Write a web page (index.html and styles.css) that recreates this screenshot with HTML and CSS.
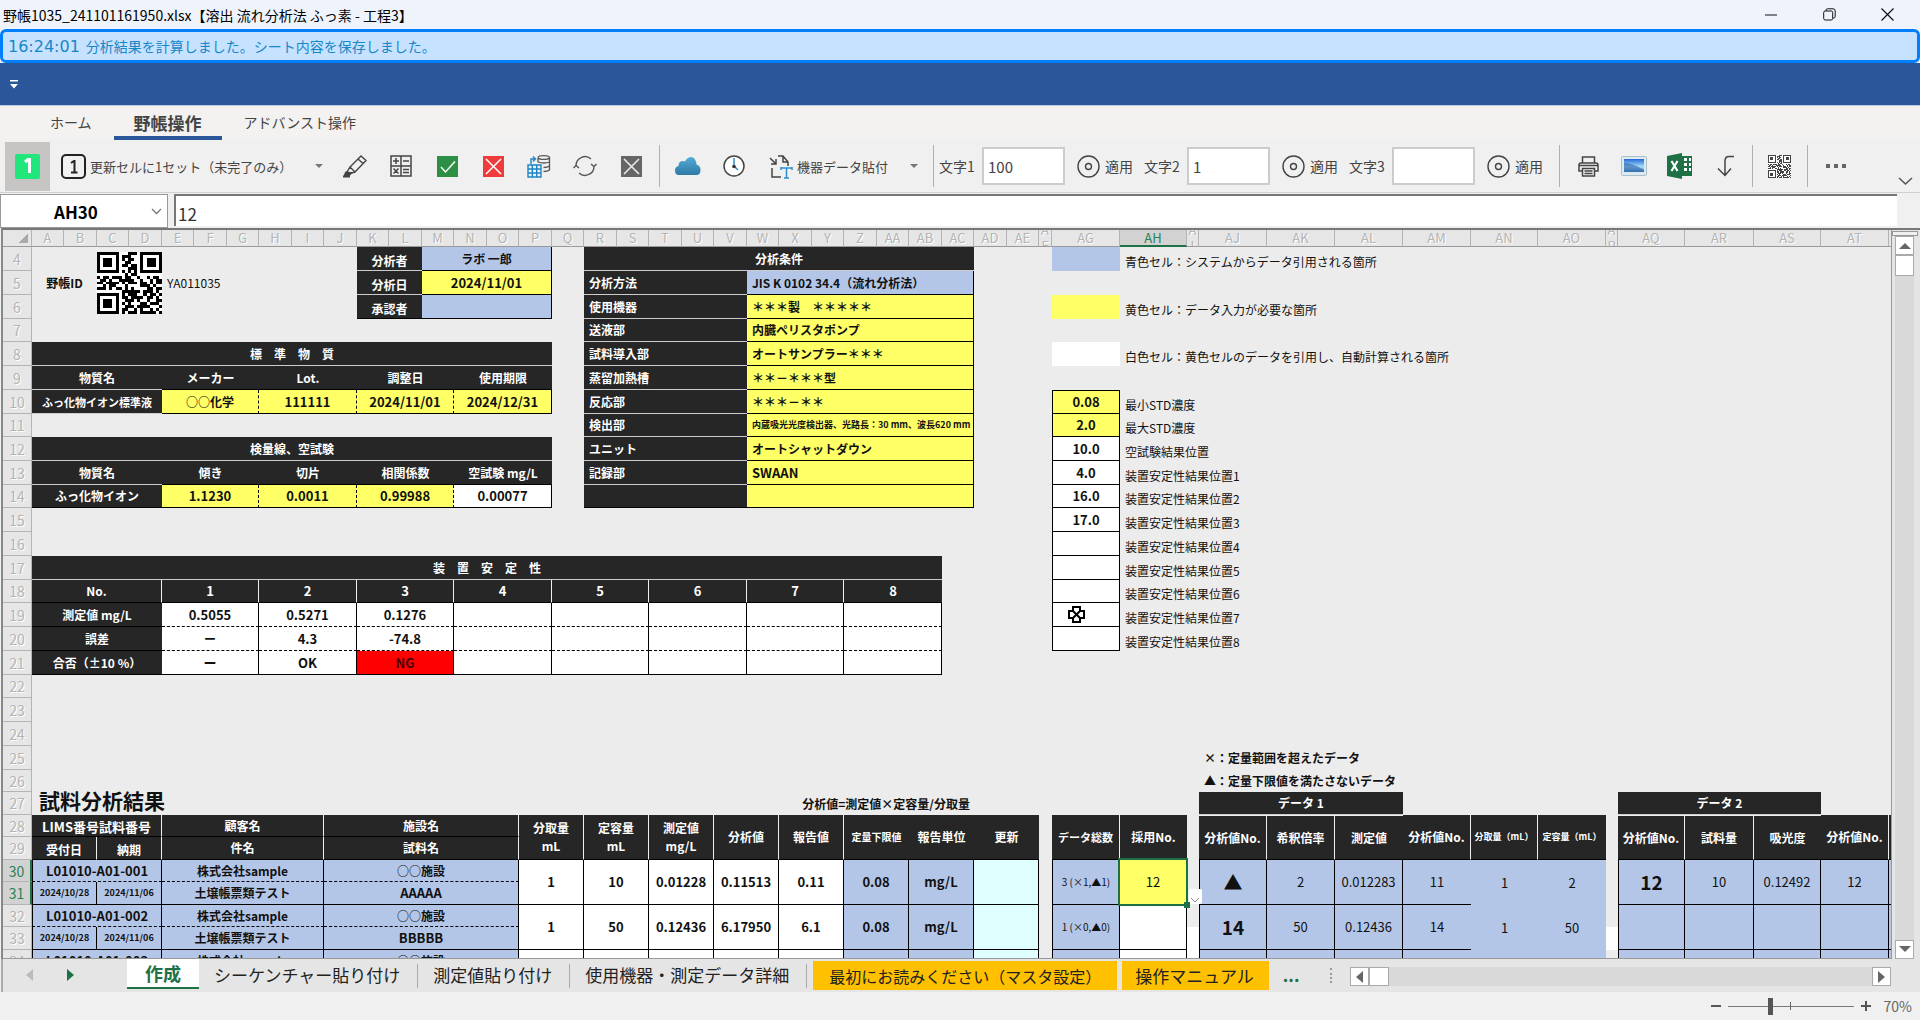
FILE: index.html
```html
<!DOCTYPE html>
<html lang="ja">
<head>
    <meta charset="UTF-8">
    <meta name="viewport" content="width=device-width, initial-scale=1.0">
    <title>野帳1035_241101161950.xlsx</title>
    <link rel="stylesheet" href="styles.css">
</head>
<body>

<header class="titlebar">
    <h1>野帳1035_241101161950.xlsx【溶出 流れ分析法 ふっ素 - 工程3】</h1>
    <div class="window-buttons">
        <button type="button" aria-label="最小化"><svg width="12" height="12" viewBox="0 0 12 12"><path d="M0 6h12" stroke="#111"/></svg></button>
        <button type="button" aria-label="元に戻す"><svg width="13" height="13" viewBox="0 0 13 13" fill="none" stroke="#111"><rect x=".7" y="3" width="9" height="9" rx="1.5"/><path d="M3 3V2.300Q3 .8 4.500 .8H10Q12.200 .8 12.200 3V8.500Q12.200 10 10.500 10H10"/></svg></button>
        <button type="button" aria-label="閉じる"><svg width="13" height="13" viewBox="0 0 13 13"><path d="M.5.5l12 12M12.500.5l-12 12" stroke="#111" stroke-width="1.200"/></svg></button>
    </div>
</header>

<div class="notice"><span class="time">16:24:01</span> 分析結果を計算しました。シート内容を保存しました。</div>

<div class="quickbar">
    <button type="button" aria-label="クイックアクセス"><svg width="8" height="9" viewBox="0 0 8 9" fill="#fff"><path d="M0 0h8v1.500H0zM0 4h8L4 8.500z"/></svg></button>
</div>

<nav class="ribbon-tabs">
    <button type="button">ホーム</button>
    <button type="button" class="active">野帳操作</button>
    <button type="button">アドバンスト操作</button>
</nav>

<div class="toolbar">
    <button type="button" class="tool pressed" aria-label="1セット">
        <svg width="25" height="25" viewBox="0 0 25 25"><rect width="25" height="25" rx="2" fill="#21e67c"/><path d="M10 8l3-2.500h1.500V19" fill="none" stroke="#fff" stroke-width="3"/></svg>
    </button>
    <button type="button" class="tool wide set-menu">
        <svg width="25" height="25" viewBox="0 0 25 25"><rect x="1" y="1" width="23" height="23" rx="4" fill="none" stroke="#222" stroke-width="2"/><path d="M10 9l3-2h.5v12M10 18.500h6.500" fill="none" stroke="#222" stroke-width="2"/></svg>
        <span>更新セルに1セット（未完了のみ）</span>
        <i class="caret"></i>
    </button>
    <button type="button" class="tool" aria-label="マーカー">
        <svg width="26" height="24" viewBox="0 0 26 24" fill="none" stroke="#444" stroke-width="1.400"><path d="M8 13L19 2l5 4.500L13 18zM8 13l5 5M19 2l-3 3 5 4.500M8 13l-3 5 3 1.500 5-1.500"/><path d="M4 18.500l5 .5-2 2H3zM1 22.500h7" fill="#444" stroke-width="2"/></svg>
    </button>
    <button type="button" class="tool" aria-label="計算">
        <svg width="22" height="22" viewBox="0 0 22 22" fill="none" stroke="#444" stroke-width="1.500"><path d="M1 1h20v20H1zM11 1v20M1 11h20M3 6h6M6 3v6M13 6h6M13 14.500h6M13 17.500h6M3.500 13.500l5 5M8.500 13.500l-5 5"/></svg>
    </button>
    <button type="button" class="tool" aria-label="完了">
        <svg width="21" height="21" viewBox="0 0 21 21"><rect width="21" height="21" fill="#2d8f43"/><path d="M4 11l4.500 5L18 5.500" fill="none" stroke="#fff" stroke-width="1.500"/></svg>
    </button>
    <button type="button" class="tool" aria-label="未完了">
        <svg width="21" height="21" viewBox="0 0 21 21"><rect width="21" height="21" fill="#ef3b3b"/><path d="M3 3l15 15M18 3L3 18" stroke="#fff" stroke-width="1.500"/></svg>
    </button>
    <button type="button" class="tool" aria-label="データ更新">
        <svg width="24" height="24" viewBox="0 0 24 24" fill="none"><path d="M11 4v4q6 2 11.500 0V3M11 3.500a5.800 2.200 0 0 1 11.500 0a5.800 2.200 0 0 1-11.500 0M22.500 7v5q-2 1.500-6 1.500M22.500 11v5q-2 1.500-6 1.500" stroke="#555" stroke-width="1.300"/><path d="M1 11h13v12H1zM1 15h13M1 19h13M5.300 11v12M9.700 11v12M4 10V5h4M6 2.500L8.500 5 6 7.500" stroke="#1c84c6" stroke-width="1.400"/></svg>
    </button>
    <button type="button" class="tool" aria-label="再読込">
        <svg width="24" height="22" viewBox="0 0 24 22" fill="none" stroke="#555" stroke-width="1.400"><path d="M3 11a9 9 0 0 1 15-7M21 11a9 9 0 0 1-15 7M.5 13L3 10.500 6 13M18 9l3 2.500L23.500 9"/></svg>
    </button>
    <button type="button" class="tool" aria-label="クリア">
        <svg width="21" height="21" viewBox="0 0 21 21"><rect width="21" height="21" fill="#666"/><path d="M3 3l15 15M18 3L3 18" stroke="#eee" stroke-width="1.500"/></svg>
    </button>
    <i class="sep"></i>
    <button type="button" class="tool" aria-label="クラウド">
        <svg width="26" height="18" viewBox="0 0 26 18"><defs><linearGradient id="cloud" x2="0" y2="1"><stop stop-color="#56abd8"/><stop offset="1" stop-color="#2d7aa5"/></linearGradient></defs><path d="M4 18Q0 18 0 13.500 0 9.500 3.500 9 3.500 4 8 4 9 4 10 4.500 12 0 16.500 0 21 1 21.500 7.500 25.500 8.500 25.500 13 25.500 18 21.500 18z" fill="url(#cloud)"/></svg>
    </button>
    <button type="button" class="tool" aria-label="履歴">
        <svg width="22" height="22" viewBox="0 0 22 22" fill="none"><circle cx="11" cy="11" r="10" fill="#fff" stroke="#444" stroke-width="1.500"/><path d="M11 3v8l4 4" stroke="#2a8dd4" stroke-width="1.500"/><circle cx="11" cy="11.500" r="1.800" fill="#333"/></svg>
    </button>
    <button type="button" class="tool wide paste-menu">
        <svg width="24" height="25" viewBox="0 0 24 25" fill="none" stroke="#444" stroke-width="1.500"><path d="M3 14v9h9M9 2h5l5 6v4M14 2v6h5M1 4l6 6M7 5v5H2"/><path d="M12 14h11M17.500 14v10M15 24h5M12 13v3M23 13v3" stroke="#2a8dd4"/></svg>
        <span>機器データ貼付</span>
        <i class="caret"></i>
    </button>
    <i class="sep"></i>
    <div class="field">
        <label for="text1">文字1</label>
        <input type="text" id="text1" value="100">
        <button type="button"><svg width="23" height="23" viewBox="0 0 23 23" fill="none" stroke="#444" stroke-width="1.400"><circle cx="11.500" cy="11.500" r="10.500"/><circle cx="11.500" cy="11.500" r="3"/></svg>適用</button>
    </div>
    <div class="field">
        <label for="text2">文字2</label>
        <input type="text" id="text2" value="1">
        <button type="button"><svg width="23" height="23" viewBox="0 0 23 23" fill="none" stroke="#444" stroke-width="1.400"><circle cx="11.500" cy="11.500" r="10.500"/><circle cx="11.500" cy="11.500" r="3"/></svg>適用</button>
    </div>
    <div class="field">
        <label for="text3">文字3</label>
        <input type="text" id="text3" value="">
        <button type="button"><svg width="23" height="23" viewBox="0 0 23 23" fill="none" stroke="#444" stroke-width="1.400"><circle cx="11.500" cy="11.500" r="10.500"/><circle cx="11.500" cy="11.500" r="3"/></svg>適用</button>
    </div>
    <i class="sep"></i>
    <button type="button" class="tool" aria-label="印刷">
        <svg width="21" height="21" viewBox="0 0 21 21" fill="none" stroke="#444" stroke-width="1.500"><path d="M4.500 7V1h12v6M4.500 15H1V9q0-2 2-2h15q2 0 2 2v6h-3.500M1 9.500h19"/><path d="M4.500 12.500h12V20h-12zM6.500 15h8M6.500 17.500h8"/></svg>
    </button>
    <button type="button" class="tool" aria-label="画像">
        <svg width="26" height="20" viewBox="0 0 26 20"><defs><linearGradient id="sky" x2="0" y2="1"><stop stop-color="#2467d8"/><stop offset=".6" stop-color="#a9e0fa"/><stop offset="1" stop-color="#3f86b8"/></linearGradient></defs><rect x=".5" y=".5" width="25" height="19" rx="1" fill="#dfeaf0" stroke="#a9c0cc"/><rect x="3" y="3" width="20" height="13" fill="url(#sky)"/><path d="M3 7q9 0 20 7v2H3z" fill="#2c63a8" opacity=".6"/></svg>
    </button>
    <button type="button" class="tool" aria-label="Excel出力">
        <svg width="26" height="26" viewBox="0 0 26 26"><path d="M14 3h11v20H14z" fill="#1e7145"/><path d="M17 5h3v3h-3zM22 5h2v3h-2zM17 10h3v3h-3zM22 10h2v3h-2zM17 15h3v3h-3zM22 15h2v3h-2z" fill="#fff"/><path d="M0 3L15 0v26L0 23z" fill="#1e7145"/><path d="M4.500 8l6 10M10.500 8l-6 10" stroke="#fff" stroke-width="2.200"/></svg>
    </button>
    <button type="button" class="tool" aria-label="下へ移動">
        <svg width="18" height="22" viewBox="0 0 18 22" fill="none" stroke="#444" stroke-width="1.500"><path d="M17 1.500h-5Q8 1.500 8 6v14M1 13.500l7 7 6-7"/></svg>
    </button>
    <i class="sep narrow"></i>
    <button type="button" class="tool" aria-label="QRコード"><svg class="qr" width="23" height="23" fill="#444"></svg></button>
    <i class="sep"></i>
    <button type="button" class="tool" aria-label="その他">
        <svg width="20" height="4" viewBox="0 0 20 4" fill="#666"><path d="M0 0h4v4H0zM8 0h4v4H8zM16 0h4v4h-4z"/></svg>
    </button>
    <button type="button" class="collapse" aria-label="リボンを折りたたむ"><svg width="15" height="8" viewBox="0 0 15 8"><path d="M1 1l6.500 6L14 1" fill="none" stroke="#555" stroke-width="1.500"/></svg></button>
</div>

<div class="formula-bar">
    <div class="name-box">
        <input type="text" value="AH30" aria-label="名前ボックス">
        <button type="button" aria-label="名前一覧"><svg width="11" height="7" viewBox="0 0 11 7"><path d="M1 1l4.500 4.500L10 1" fill="none" stroke="#777" stroke-width="1.300"/></svg></button>
    </div>
    <input type="text" class="formula" value="12" aria-label="数式">
</div>

<main class="sheet-area">
    <div class="viewport">
        <table class="sheet" id="sheet"></table>
    </div>
    <div class="vscroll">
        <div class="splitter"></div>
        <button type="button" aria-label="上へ"><svg width="12" height="7" viewBox="0 0 12 7"><path d="M0 7l6-6 6 6z" fill="#666"/></svg></button>
        <div class="thumb"></div>
        <div class="track"></div>
        <button type="button" aria-label="下へ"><svg width="12" height="7" viewBox="0 0 12 7"><path d="M0 0l6 6 6-6z" fill="#666"/></svg></button>
    </div>
</main>

<div class="sheet-tabs">
    <button type="button" class="prev" aria-label="前のシート"><svg width="7" height="12" viewBox="0 0 7 12"><path d="M7 0v12L0 6z" fill="#bbb"/></svg></button>
    <button type="button" class="next" aria-label="次のシート"><svg width="7" height="12" viewBox="0 0 7 12"><path d="M0 0v12l7-6z" fill="#1e7145"/></svg></button>
    <button type="button" class="tab current">作成</button>
    <button type="button" class="tab">シーケンチャー貼り付け</button>
    <button type="button" class="tab">測定値貼り付け</button>
    <button type="button" class="tab">使用機器・測定データ詳細</button>
    <button type="button" class="tab orange manual">最初にお読みください（マスタ設定）</button>
    <button type="button" class="tab orange">操作マニュアル</button>
    <button type="button" class="more">...</button>
    <i class="grip"></i>
    <div class="hscroll">
        <button type="button" aria-label="左へ"><svg width="7" height="12" viewBox="0 0 7 12"><path d="M7 0v12L0 6z" fill="#666"/></svg></button>
        <div class="thumb"></div>
        <div class="track"></div>
        <button type="button" aria-label="右へ"><svg width="7" height="12" viewBox="0 0 7 12"><path d="M0 0v12l7-6z" fill="#666"/></svg></button>
    </div>
</div>

<footer class="status">
    <button type="button" aria-label="縮小"><svg width="10" height="10" viewBox="0 0 10 10"><path d="M0 5h10" stroke="#555" stroke-width="2"/></svg></button>
    <input type="range" id="zoom" min="10" max="190" value="70" aria-label="ズーム">
    <button type="button" aria-label="拡大"><svg width="10" height="10" viewBox="0 0 10 10"><path d="M0 5h10M5 0v10" stroke="#555" stroke-width="2"/></svg></button>
    <label for="zoom">70%</label>
</footer>

<script src="sheet.js"></script>
</body>
</html>
```

FILE: sheet.js
```js
const FIRST_ROW = 4;
const rowHeights = [24, 24, 24, 23, 24, 24, 24, 23, 24, 24, 23, 24, 24, 24, 23, 24, 24,
    24, 23, 24, 24, 24, 22, 23, 22, 23, 22, 23, 22, 23, 22];

const colWidths = [];
for (let i = 0; i < 31; i++) colWidths.push(i % 2 ? 33 : 32);
colWidths.push(13, 68, 67, 12, 68, 68, 68, 68, 67, 68, 12, 67, 69, 67, 68, 32);

// [range, text, classes]
const cells = [
    // header block
    ['A5:B5', '野帳ID', 'strong'],
    ['C4:D6', 'QR', ''],
    ['E5:H5', 'YA011035', 'plain left'],
    ['K4:L4', '分析者', 'dark low'], ['M4:P4', 'ラボ 一郎', 'blue b'],
    ['K5:L5', '分析日', 'dark low'], ['M5:P5', '2024/11/01', 'yellow b'],
    ['K6:L6', '承認者', 'dark low last'], ['M6:P6', '', 'blue b'],

    // standard material
    ['A8:P8', '標　準　物　質', 'dark'],
    ['A9:D9', '物質名', 'dark'], ['E9:G9', 'メーカー', 'dark last'], ['H9:J9', 'Lot.', 'dark last'],
    ['K9:M9', '調整日', 'dark last'], ['N9:P9', '使用期限', 'dark last'],
    ['A10:D10', 'ふっ化物イオン標準液', 'dark small'], ['E10:G10', '○○化学', 'yellow b dotr'],
    ['H10:J10', '111111', 'yellow b dotr'], ['K10:M10', '2024/11/01', 'yellow b dotr'],
    ['N10:P10', '2024/12/31', 'yellow b'],

    // calibration curve
    ['A12:P12', '検量線、空試験', 'dark'],
    ['A13:D13', '物質名', 'dark'], ['E13:G13', '傾き', 'dark last'], ['H13:J13', '切片', 'dark last'],
    ['K13:M13', '相関係数', 'dark last'], ['N13:P13', '空試験 mg/L', 'dark last'],
    ['A14:D14', 'ふっ化物イオン', 'dark last'], ['E14:G14', '1.1230', 'yellow b dotr'],
    ['H14:J14', '0.0011', 'yellow b dotr'], ['K14:M14', '0.99988', 'yellow b dotr'],
    ['N14:P14', '0.00077', 'white b'],

    // stability
    ['A17:AB17', '装　置　安　定　性', 'dark'],
    ['A18:D18', 'No.', 'dark last wr'],
    ['A19:D19', '測定値 mg/L', 'dark last'],
    ['A20:D20', '誤差', 'dark last'],
    ['A21:D21', '合否（±10 %）', 'dark last'],

    // colour legend
    ['AG4', '', 'blue'], ['AH4:AO4', '青色セル：システムからデータ引用される箇所', 'plain left low'],
    ['AG6', '', 'yellow'], ['AH6:AO6', '黄色セル：データ入力が必要な箇所', 'plain left low'],
    ['AG8', '', 'white'], ['AH8:AO8', '白色セル：黄色セルのデータを引用し、自動計算される箇所', 'plain left low'],

    ['AJ25:AO25', '×：定量範囲を超えたデータ', 'strong left'],
    ['AJ26:AO26', '▲：定量下限値を満たさないデータ', 'strong left'],
    ['AJ27:AL27', 'データ 1', 'dark'],
    ['AQ27:AS27', 'データ 2', 'dark'],
    ['A26:H27', '試料分析結果', 'title left'],
    ['V27:AC27', '分析値=測定値×定容量/分取量', 'strong right'],

    // result table head
    ['A28:D28', 'LIMS番号試料番号', 'dark last wr low num'],
    ['A29:B29', '受付日', 'dark last wr low'], ['C29:D29', '納期', 'dark last wr low'],
    ['E28:I28', '顧客名', 'dark last wr'], ['E29:I29', '件名', 'dark last wr'],
    ['J28:O28', '施設名', 'dark last wr'], ['J29:O29', '試料名', 'dark last wr'],
    ['P28:Q29', '分取量\nmL', 'dark last wr'], ['R28:S29', '定容量\nmL', 'dark last wr'],
    ['T28:U29', '測定値\nmg/L', 'dark last wr'], ['V28:W29', '分析値', 'dark last wr'],
    ['X28:Y29', '報告値', 'dark last wr'], ['Z28:AA29', '定量下限値', 'dark last tiny'],
    ['AB28:AC29', '報告単位', 'dark last'], ['AD28:AE29', '更新', 'dark last'],
    ['AG28:AG29', 'データ総数', 'dark last small wr'], ['AH28:AH29', '採用No.', 'dark last'],
    ['AJ28:AJ29', '分析値No.', 'dark last wr wt'], ['AK28:AK29', '希釈倍率', 'dark last wr wt'],
    ['AL28:AL29', '測定値', 'dark last wt'], ['AM28:AM29', '分析値No.', 'dark last wr'],
    ['AN28:AN29', '分取量（mL）', 'dark last wr micro'], ['AO28:AO29', '定容量（mL）', 'dark last micro'],
    ['AQ28:AQ29', '分析値No.', 'dark last wr wt'], ['AR28:AR29', '試料量', 'dark last wr wt'],
    ['AS28:AS29', '吸光度', 'dark last wt'], ['AT28:AT29', '分析値No.', 'dark last wr'],
    ['AU28:AU29', '', 'dark last'],
    ['AI33:AI34', '', 'white'], ['AP33', '', 'white'],
];

// analysis conditions
cells.push(['R4:AC4', '分析条件', 'dark']);
[
    ['分析方法', 'JIS K 0102 34.4（流れ分析法）', 'blue'],
    ['使用機器', '＊＊＊製　＊＊＊＊＊'],
    ['送液部', '内臓ペリスタポンプ'],
    ['試料導入部', 'オートサンプラー＊＊＊'],
    ['蒸留加熱槽', '＊＊－＊＊＊型'],
    ['反応部', '＊＊＊－＊＊'],
    ['検出部', '内蔵吸光光度検出器、光路長：30 mm、波長620 mm', 'yellow micro'],
    ['ユニット', 'オートシャットダウン'],
    ['記録部', 'SWAAN', 'yellow num'],
    ['', ''],
].forEach(([label, value, cls], i) => {
    const r = 5 + i;
    cells.push([`R${r}:V${r}`, label, 'dark left' + (i === 9 ? ' last' : '')]);
    cells.push([`W${r}:AC${r}`, value, (cls || 'yellow') + ' b left']);
});

// stability values, 8 measuring points
const points = ['E:G', 'H:J', 'K:M', 'N:P', 'Q:S', 'T:V', 'W:Y', 'Z:AB'];
const stability = {
    19: ['0.5055', '0.5271', '0.1276'],
    20: ['ー', '4.3', '-74.8'],
    21: ['ー', 'OK', 'NG'],
};
points.forEach((p, i) => {
    const [a, z] = p.split(':');
    cells.push([`${a}18:${z}18`, String(i + 1), 'dark last' + (i < 7 ? ' wr' : '')]);
    for (const r of [19, 20, 21]) {
        const text = stability[r][i] || '';
        const cls = text === 'NG' ? 'red b num' : r === 21 ? 'white b num' : 'white dotb';
        cells.push([`${a}${r}:${z}${r}`, text, cls]);
    }
});

// position settings
const settings = ['0.08', '2.0', '10.0', '4.0', '16.0', '17.0', '', '', '', '', ''];
const settingNames = ['最小STD濃度', '最大STD濃度', '空試験結果位置'];
for (let i = 1; i <= 8; i++) settingNames.push('装置安定性結果位置' + i);
settings.forEach((v, i) => {
    const r = 10 + i;
    cells.push([`AG${r}`, v, (i < 2 ? 'yellow' : 'white') + ' b bl' + (i === 0 ? ' bt' : '')]);
    cells.push([`AH${r}:AK${r}`, settingNames[i], 'plain left low']);
});

// samples, two sheet rows each
const samples = [
    { id: 'L01010-A01-001', site: 'AAAAA', row: ['1', '10', '0.01228', '0.11513', '0.11', '0.08', 'mg/L'],
      count: '3 (×1,▲1)', use: '12', d1: ['▲', '2', '0.012283', '11', '1', '2'], d2: ['12', '10', '0.12492', '12'] },
    { id: 'L01010-A01-002', site: 'BBBBB', row: ['1', '50', '0.12436', '6.17950', '6.1', '0.08', 'mg/L'],
      count: '1 (×0,▲0)', use: '', d1: ['14', '50', '0.12436', '14', '1', '50'], d2: ['', '', '', ''] },
    { id: 'L01010-A01-003', site: '', row: ['', '', '', '', '', '', ''],
      count: '', use: '', d1: ['', '', '', '', '', ''], d2: ['', '', '', ''] },
];
samples.forEach((s, i) => {
    const r = 30 + i * 2;
    const n = i === 2 ? r : r + 1;
    cells.push([`A${r}:D${r}`, s.id, 'blue dotb bl num'], [`E${r}:I${r}`, '株式会社sample', 'blue dotb'],
        [`J${r}:O${r}`, '○○施設', 'blue dotb']);
    if (n > r) {
        cells.push([`A${n}:B${n}`, '2024/10/28', 'blue b micro bl'], [`C${n}:D${n}`, '2024/11/06', 'blue b micro'],
            [`E${n}:I${n}`, '土壌帳票類テスト', 'blue b'], [`J${n}:O${n}`, s.site, 'blue b num']);
    }
    ['P:Q', 'R:S', 'T:U', 'V:W', 'X:Y', 'Z:AA', 'AB:AC'].forEach((p, k) => {
        const [a, z] = p.split(':');
        cells.push([`${a}${r}:${z}${n}`, s.row[k], (k < 5 ? 'white' : 'blue') + ' b num']);
    });
    cells.push([`AD${r}:AE${n}`, '', 'cyan b']);
    cells.push([`AG${r}:AG${n}`, s.count, 'blue b bl count']);
    cells.push([`AH${r}:AH${n}`, s.use, i === 0 ? 'yellow b plain selected' : 'white b']);
    ['AJ', 'AK', 'AL', 'AM', 'AN', 'AO'].forEach((c, k) => {
        cells.push([`${c}${r}:${c}${n}`, s.d1[k], 'blue ' + (k === 0 ? 'big bl ' : 'plain ') + (k < 4 ? 'b' : '') + (k === 3 ? ' nor' : '')]);
    });
    ['AQ', 'AR', 'AS', 'AT'].forEach((c, k) => {
        cells.push([`${c}${r}:${c}${n}`, s.d2[k], 'blue b ' + (k === 0 ? 'big bl' : 'plain')]);
    });
    cells.push([`AU${r}:AU${n}`, '', 'blue b']);
});

const QR = [
    '111111100011101111111', '100000101110001000001', '101110101011001011101',
    '101110100110001011101', '101110101101101011101', '100000100011101000001',
    '111111101010101111111', '000000000101100000000', '101101110110010010110',
    '011010011111001001011', '110111101011101101011', '001011000100001110100',
    '111010110101000011011', '000000001111110111010', '111111101011100101101',
    '100000101101111011010', '101110100111010010011', '101110101010001101110',
    '101110100111011110001', '100000101100101001010', '111111101011101111101',
];

function drawQR(svg) {
    let d = '';
    QR.forEach((line, y) => [...line].forEach((bit, x) => {
        if (bit === '1') d += `M${x} ${y}h1v1h-1z`;
    }));
    svg.setAttribute('viewBox', '0 0 21 21');
    svg.setAttribute('preserveAspectRatio', 'none');
    svg.setAttribute('shape-rendering', 'crispEdges');
    svg.innerHTML = `<rect width="21" height="21" fill="#fff"/><path d="${d}"/>`;
}

function colIndex(name) {
    return [...name].reduce((n, ch) => n * 26 + ch.charCodeAt(0) - 64, 0) - 1;
}

function colName(i) {
    return i < 26 ? String.fromCharCode(65 + i) : 'A' + String.fromCharCode(39 + i);
}

function parseRange(range) {
    const [a, z = a] = range.split(':');
    const [, c1, r1] = a.match(/([A-Z]+)(\d+)/);
    const [, c2, r2] = z.match(/([A-Z]+)(\d+)/);
    return { c: colIndex(c1), r: +r1, cols: colIndex(c2) - colIndex(c1) + 1, rows: r2 - r1 + 1 };
}

function headClass(name, width) {
    if (name === 'AH') return 'on';
    return width < 20 ? 'slim' : '';
}

function buildSheet() {
    const table = document.getElementById('sheet');
    const group = document.createElement('colgroup');
    [29, ...colWidths].forEach(w => {
        const col = document.createElement('col');
        col.style.width = w + 'px';
        group.append(col);
    });
    table.append(group);

    const head = table.createTHead().insertRow();
    head.innerHTML = '<th class="corner"></th>' + colWidths.map((w, i) =>
        `<th scope="col" class="${headClass(colName(i), w)}"><div>${colName(i)}</div></th>`).join('');

    const starts = new Map();
    const taken = new Set();
    cells.forEach(([range, text, cls]) => {
        const p = parseRange(range);
        starts.set(p.r + ',' + p.c, { ...p, text, cls });
        for (let y = 0; y < p.rows; y++) {
            for (let x = 0; x < p.cols; x++) taken.add((p.r + y) + ',' + (p.c + x));
        }
    });

    const body = table.createTBody();
    rowHeights.forEach((h, i) => {
        const r = FIRST_ROW + i;
        const tr = body.insertRow();
        tr.style.height = h + 'px';
        const th = document.createElement('th');
        th.scope = 'row';
        th.textContent = r;
        if (r === 30 || r === 31) th.className = 'on';
        tr.append(th);
        for (let c = 0; c < colWidths.length; c++) {
            const cell = starts.get(r + ',' + c);
            if (!cell && taken.has(r + ',' + c)) continue;
            const td = tr.insertCell();
            if (!cell) continue;
            td.colSpan = cell.cols;
            td.rowSpan = cell.rows;
            td.className = cell.cls;
            if (cell.text === 'QR') {
                td.innerHTML = '<svg class="qr" width="65" height="62"></svg>';
                td.classList.add('qr-cell');
            } else {
                td.textContent = cell.text;
                if (/^[\d.\/-]+$/.test(cell.text)) td.classList.add('num');
            }
            if (cell.cls.includes('selected')) {
                td.insertAdjacentHTML('beforeend', '<i class="selection"></i><i class="handle"></i>' +
                    '<i class="smart-tag"><svg width="10" height="5" viewBox="0 0 10 5"><path d="M1 0l4 4 4-4" fill="none" stroke="#888"/></svg></i>');
            }
            if (r === 19 && c === colIndex('AG')) {
                td.insertAdjacentHTML('beforeend', '<svg class="cursor" width="17" height="17" viewBox="0 0 17 17">' +
                    '<path d="M5 1h7v4h4v7h-4v4H5v-4H1V5h4z" fill="#fff" stroke="#000" stroke-width="2"/>' +
                    '<path d="M5 5l7 7M12 5l-7 7" stroke="#000" stroke-width="2"/></svg>');
            }
        }
    });
}

buildSheet();
document.querySelectorAll('svg.qr').forEach(drawQR);
```

FILE: styles.css
```css
* {
    box-sizing: border-box;
}
body {
    margin: 0;
    height: 100vh;
    display: flex;
    flex-direction: column;
    overflow: hidden;
    background: #f0f0f0;
    color: #333;
    font-family: "Noto Sans CJK JP", "Liberation Sans", sans-serif;
    font-size: 14px;
}
button {
    font: inherit;
    color: inherit;
    background: none;
    border: 0;
    padding: 0;
    display: flex;
    align-items: center;
    justify-content: center;
    white-space: nowrap;
}
input {
    font: inherit;
    color: inherit;
}
svg {
    display: block;
    flex: none;
}

/* title bar */
.titlebar {
    height: 29px;
    flex: none;
    display: flex;
    align-items: center;
    justify-content: space-between;
    background: #eff3fb;
    padding: 0 4px 0 3px;
}
.titlebar h1 {
    margin: 0;
    font-size: 14px;
    font-weight: 400;
    color: #000;
}
.window-buttons {
    display: flex;
}
.window-buttons button {
    width: 58px;
    height: 28px;
}
.notice {
    height: 34px;
    flex: none;
    display: flex;
    align-items: center;
    gap: 6px;
    padding-left: 5px;
    border: 3px solid #0080ff;
    border-radius: 6px;
    background: #c7e2ff;
    color: #1787c8;
    font-size: 14px;
}
.notice .time {
    font-family: "DejaVu Sans", sans-serif;
    font-size: 16px;
}
.quickbar {
    height: 43px;
    flex: none;
    display: flex;
    align-items: center;
    padding-left: 10px;
    background: #2a579a;
    border-bottom: 1px solid #b9c6dd;
}

/* ribbon */
.ribbon-tabs {
    height: 34px;
    flex: none;
    display: flex;
    gap: 2px;
    padding-left: 30px;
    background: #f3f2f0;
    color: #444;
}
.ribbon-tabs button {
    padding: 2px 20px 0;
    border-bottom: 4px solid transparent;
}
.ribbon-tabs .active {
    font-size: 17px;
    font-weight: 700;
    border-bottom-color: #2a579a;
}
.toolbar {
    height: 53px;
    flex: none;
    display: flex;
    align-items: center;
    padding-left: 5px;
    border-bottom: 1px solid #d0d0d0;
    color: #444;
}
.tool {
    width: 46px;
    height: 49px;
    flex: none;
}
.tool.pressed {
    width: 45px;
    background: #c6c5c4;
}
.tool.wide {
    justify-content: flex-start;
    gap: 4px;
    font-size: 13px;
}
.tool.set-menu {
    width: 282px;
    padding: 0 9px 0 11px;
}
.tool.paste-menu {
    width: 171px;
    padding: 0 10px 0 12px;
}
.caret {
    margin-left: auto;
    border: 4px solid transparent;
    border-top-color: #777;
    border-bottom: 0;
}
.sep {
    width: 1px;
    height: 42px;
    margin: 0 5px;
    background: #b0b0b0;
    flex: none;
}
.sep.narrow {
    margin: 0 3px;
}
.field {
    width: 205px;
    display: flex;
    align-items: center;
}
.field label {
    width: 43px;
    white-space: nowrap;
}
.field input {
    width: 83px;
    height: 38px;
    padding: 0 4px;
    border: 2px solid #ccc;
    background: #fff;
    font-size: 15px;
}
.field button {
    padding-left: 12px;
    gap: 5px;
}
.collapse {
    margin: 30px 7px 0 auto;
}

/* formula bar */
.formula-bar {
    height: 35px;
    flex: none;
    display: flex;
    gap: 6px;
    padding: 1px 23px 0 0;
}
.name-box {
    width: 168px;
    display: flex;
    background: #fff;
    border: 1px solid #999;
}
.name-box input {
    width: 150px;
    border: 0;
    background: none;
    color: #000;
    font-size: 17px;
    font-weight: 700;
    text-align: center;
}
.formula {
    flex: 1;
    height: 32px;
    border: 0;
    border-top: 2px solid #777;
    border-left: 2px solid #777;
    padding: 4px 2px 0;
    background: #fff;
    font-size: 17px;
}

/* sheet */
.sheet-area {
    flex: 1;
    min-height: 0;
    display: flex;
    margin-left: 1px;
    border-top: 2px solid #777;
    border-left: 2px solid #888;
    background: #e5e5e5;
}
.viewport {
    flex: 1;
    min-width: 0;
    overflow: hidden;
    background: #ececec;
    border-right: 1px solid #999;
    border-bottom: 1px solid #999;
}
.sheet {
    width: 0;
    table-layout: fixed;
    border-collapse: separate;
    border-spacing: 0;
    line-height: 18px;
    font-size: 12px;
}
.sheet th {
    padding: 0;
    background: #e6e6e6;
    color: #b4b4b4;
    font-size: 14px;
    font-weight: 400;
    text-shadow: 1px 1px #fff;
    border-bottom: 1px solid #b4b4b4;
    border-right: 1px solid #b4b4b4;
}
.sheet thead th {
    height: 17px;
    line-height: 16px;
    font-size: 13px;
    border-bottom-color: #999;
}
.sheet .slim div {
    height: 16px;
    overflow: hidden;
    display: flex;
    align-items: center;
    justify-content: center;
    word-break: break-all;
    width: 9px;
    margin: 0 auto;
}
.sheet .corner {
    background: linear-gradient(135deg, transparent 50%, #aaa 50%) no-repeat 16px 4px / 9px 9px #e6e6e6;
}
.sheet th.on {
    background: #d2d2d2;
    color: #2b8254;
    text-shadow: none;
}
.sheet thead th.on {
    line-height: 15px;
    border-bottom: 2px solid #1e7145;
}
.sheet tbody th.on {
    border-right: 2px solid #1e7145;
}
.sheet td {
    padding: 0;
    color: #111;
    font-weight: 700;
    text-align: center;
    vertical-align: middle;
    white-space: pre;
    position: relative;
}
.sheet td.left {
    text-align: left;
    padding-left: 5px;
}
.sheet td.right {
    text-align: right;
    padding-right: 4px;
}
.sheet td.low {
    vertical-align: bottom;
}
.sheet td.plain {
    font-weight: 400;
}
.sheet td.num {
    font-size: 13px;
}
.sheet td.small {
    font-size: 11px;
}
.sheet td.tiny {
    font-size: 10px;
}
.sheet td.micro {
    font-size: 9px;
}
.sheet td.count {
    font-size: 10px;
    font-weight: 400;
}
.sheet td.big {
    font-size: 19px;
}
.sheet td.title {
    font-size: 21px;
    line-height: 24px;
    vertical-align: bottom;
    padding: 0 0 3px 7px;
}
.sheet td.blue {
    background: #b4c6e7;
}
.sheet td.yellow {
    background: #ffff66;
}
.sheet td.white {
    background: #fff;
}
.sheet td.cyan {
    background: #dfffff;
}
.sheet td.red {
    background: #f00;
    color: #400;
}
.sheet td.dark {
    background: #262626;
    color: #fff;
    border-bottom: 1px solid #ccc;
}
.sheet td.dark.last {
    border-bottom-color: #000;
}
.sheet td.wr {
    border-right: 1px solid #eee;
}
.sheet td.wt {
    border-top: 1px solid #eee;
}
.sheet td.b {
    border-right: 1px solid #000;
    border-bottom: 1px solid #000;
}
.sheet td.bl {
    border-left: 1px solid #000;
}
.sheet td.bt {
    border-top: 1px solid #000;
}
.sheet td.dotb {
    border-right: 1px solid #000;
    border-bottom: 1px dashed #000;
}
.sheet td.dotr {
    border-right: 1px dashed #000;
}
.sheet td.nor {
    border-right: 0;
}
.sheet td.qr-cell {
    vertical-align: top;
    padding-top: 5px;
}
.selection {
    position: absolute;
    inset: -2px;
    border: 2px solid #1e7145;
    z-index: 1;
}
.handle {
    position: absolute;
    right: -4px;
    bottom: -4px;
    width: 6px;
    height: 6px;
    background: #1e7145;
    z-index: 3;
}
.smart-tag {
    position: absolute;
    left: 69px;
    bottom: 0;
    width: 13px;
    height: 15px;
    padding: 9px 1px 0;
    background: #fff;
    border-radius: 2px;
    z-index: 2;
}
.cursor {
    position: absolute;
    left: 15px;
    top: 3px;
}

/* scroll bars */
.vscroll {
    width: 28px;
    display: flex;
    flex-direction: column;
    padding: 0 6px 0 3px;
}
.vscroll .splitter {
    height: 5px;
    margin: 1px -4px 0 -3px;
    border: 1px solid #999;
    background: #f0f0f0;
    flex: none;
}
.vscroll button,
.hscroll button {
    width: 19px;
    height: 19px;
    background: #fff;
    border: 1px solid #aaa;
    flex: none;
}
.vscroll .thumb {
    height: 21px;
    background: #fff;
    border: 1px solid #aaa;
    flex: none;
}
.vscroll .track,
.hscroll .track {
    flex: 1;
    background: #d9d9d9;
}

/* sheet tabs */
.sheet-tabs {
    height: 33px;
    flex: none;
    display: flex;
    align-items: flex-start;
    margin-left: 1px;
    border-left: 2px solid #aaa;
    background: #e5e5e5;
    color: #222;
}
.sheet-tabs .prev {
    height: 32px;
    padding: 0 13px 0 23px;
}
.sheet-tabs .next {
    height: 32px;
    padding: 0 53px 0 21px;
}
.tab {
    height: 30px;
    padding: 0 18px 0 15px;
    font-size: 17px;
    position: relative;
}
.tab + .tab:not(.orange)::after {
    content: "";
    position: absolute;
    right: 0;
    top: 5px;
    width: 1px;
    height: 24px;
    background: #aaa;
}
.tab.current {
    padding: 0 18px;
    font-size: 18px;
    font-weight: 700;
    color: #1e7145;
    background: #fff;
    border-bottom: 2px solid #1e7145;
}
.tab.orange {
    background: #ffc000;
    height: 29px;
    margin: 2px 5px 0 0;
    padding: 0 15px 0 13px;
}
.tab.manual {
    font-size: 16px;
    margin-left: 6px;
    padding: 0 16px;
}
.more {
    height: 30px;
    padding: 0 9px;
    font-size: 17px;
    font-weight: 700;
    color: #1e7145;
}
.grip {
    height: 15px;
    margin: 9px 18px 0 auto;
    border-left: 2px dotted #999;
}
.hscroll {
    width: 541px;
    display: flex;
    margin: 8px 29px 0 0;
}
.hscroll .thumb {
    width: 20px;
    background: #fff;
    border: 1px solid #aaa;
}

/* status bar */
.status {
    height: 28px;
    flex: none;
    display: flex;
    align-items: center;
    justify-content: flex-end;
    padding-right: 8px;
    color: #666;
}
.status input {
    appearance: none;
    width: 126px;
    height: 18px;
    margin: 0 7px;
    background:
        linear-gradient(#666, #666) center / 1px 8px no-repeat,
        linear-gradient(#777, #777) center / 100% 1px no-repeat;
}
.status input::-webkit-slider-thumb {
    appearance: none;
    width: 5px;
    height: 17px;
    background: #555;
}
.status label {
    margin-left: 13px;
    font-size: 14px;
}
```
